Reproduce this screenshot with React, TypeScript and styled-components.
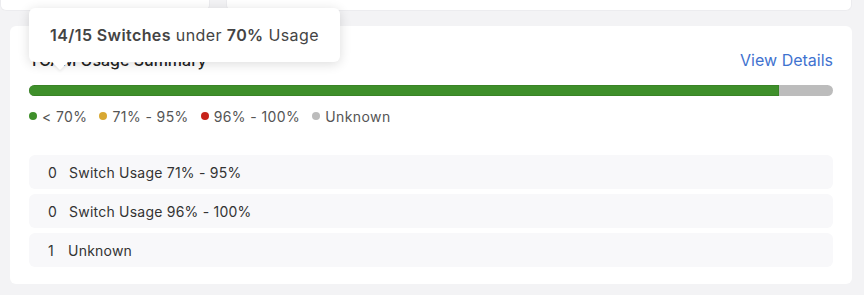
import React from 'react';
import styled, { createGlobalStyle } from 'styled-components';

const GlobalStyle = createGlobalStyle`
  html, body {
    margin: 0;
    padding: 0;
    background: #f3f3f5;
    font-family: Inter, "Noto Sans", sans-serif;
    color: #333;
  }
`;

const Page = styled.div`
  width: 864px;
  height: 295px;
  overflow: hidden;
`;

const TopRow = styled.div`
  display: flex;
  gap: 16px;
  height: 11px;
  padding-right: 12px;
`;

const StubCard = styled.div<{ $width?: number }>`
  background: #fff;
  border: 1px solid #ececef;
  border-top: none;
  border-radius: 0 0 6px 6px;
  ${({ $width }) => ($width ? `width: ${$width}px;` : 'flex: 1;')}
`;

const Card = styled.section`
  position: relative;
  margin: 15px 12px 0 10px;
  padding: 22px 19px 19px;
  height: 258px;
  box-sizing: border-box;
  background: #fff;
  border-radius: 6px;
`;

const HeaderRow = styled.div`
  display: flex;
  justify-content: space-between;
  align-items: center;
  height: 24px;
`;

const Title = styled.h3`
  margin: 0;
  font-size: 16px;
  font-weight: 500;
  color: #222;
`;

const DetailsLink = styled.a`
  font-size: 16px;
  color: #3f72cf;
  text-decoration: none;
`;

const Bar = styled.div`
  display: flex;
  margin-top: 13px;
  height: 11px;
  border-radius: 6px;
  overflow: hidden;
  background: #bcbcbc;
`;

const Segment = styled.div<{ $color: string }>`
  background: ${({ $color }) => $color};
  box-shadow: inset 0 0 0 1px rgba(0, 0, 0, 0.08);
`;

const Legend = styled.div`
  display: flex;
  gap: 12px;
  margin-top: 10px;
  height: 20px;
  align-items: center;
  font-size: 14px;
  letter-spacing: 0.4px;
  color: #555;
`;

const LegendItem = styled.span`
  display: flex;
  align-items: center;
  gap: 5px;
`;

const Dot = styled.span<{ $color: string }>`
  width: 8px;
  height: 8px;
  border-radius: 50%;
  background: ${({ $color }) => $color};
`;

const Rows = styled.div`
  display: flex;
  flex-direction: column;
  gap: 5px;
  margin-top: 29px;
`;

const Row = styled.div`
  display: flex;
  align-items: center;
  gap: 12px;
  height: 34px;
  padding-left: 19px;
  border-radius: 6px;
  background: #f8f8fa;
  font-size: 14px;
  letter-spacing: 0.22px;
  color: #333;
`;

const Count = styled.span`
  min-width: 8px;
`;

const Tooltip = styled.div`
  position: absolute;
  left: 19px;
  top: -18px;
  width: 311px;
  height: 54px;
  display: flex;
  align-items: center;
  justify-content: center;
  background: #fff;
  border-radius: 6px;
  box-shadow: 0 2px 12px rgba(0, 0, 0, 0.14);
  font-size: 16px;
  letter-spacing: 0.4px;
  color: #444;

  b {
    font-weight: 600;
  }

  &::after {
    content: '';
    position: absolute;
    left: 23px;
    bottom: -8px;
    width: 0;
    height: 0;
    border-left: 8px solid transparent;
    border-right: 8px solid transparent;
    border-top: 8px solid #fff;
    filter: drop-shadow(0 2px 1px rgba(0, 0, 0, 0.06));
  }
`;

const legend = [
  { label: '< 70%', color: '#3e8f2a' },
  { label: '71% - 95%', color: '#d8a832' },
  { label: '96% - 100%', color: '#c6221a' },
  { label: 'Unknown', color: '#bcbcbc' },
];

const rows = [
  { count: 0, label: 'Switch Usage 71% - 95%' },
  { count: 0, label: 'Switch Usage 96% - 100%' },
  { count: 1, label: 'Unknown' },
];

export default function App() {
  const healthy = 14;
  const total = 15;
  return (
    <Page>
      <GlobalStyle />
      <TopRow>
        <StubCard $width={208} />
        <StubCard />
      </TopRow>
      <Card>
        <HeaderRow>
          <Title>TCAM Usage Summary</Title>
          <DetailsLink href="#">View Details</DetailsLink>
        </HeaderRow>
        <Bar>
          <Segment $color="#3e8f2a" style={{ width: `${(healthy / total) * 100}%` }} />
        </Bar>
        <Legend>
          {legend.map((l) => (
            <LegendItem key={l.label}>
              <Dot $color={l.color} />
              {l.label}
            </LegendItem>
          ))}
        </Legend>
        <Rows>
          {rows.map((r) => (
            <Row key={r.label}>
              <Count>{r.count}</Count>
              {r.label}
            </Row>
          ))}
        </Rows>
        <Tooltip>
          <span>
            <b>
              {healthy}/{total} Switches
            </b>{' '}
            under <b>70%</b> Usage
          </span>
        </Tooltip>
      </Card>
    </Page>
  );
}
